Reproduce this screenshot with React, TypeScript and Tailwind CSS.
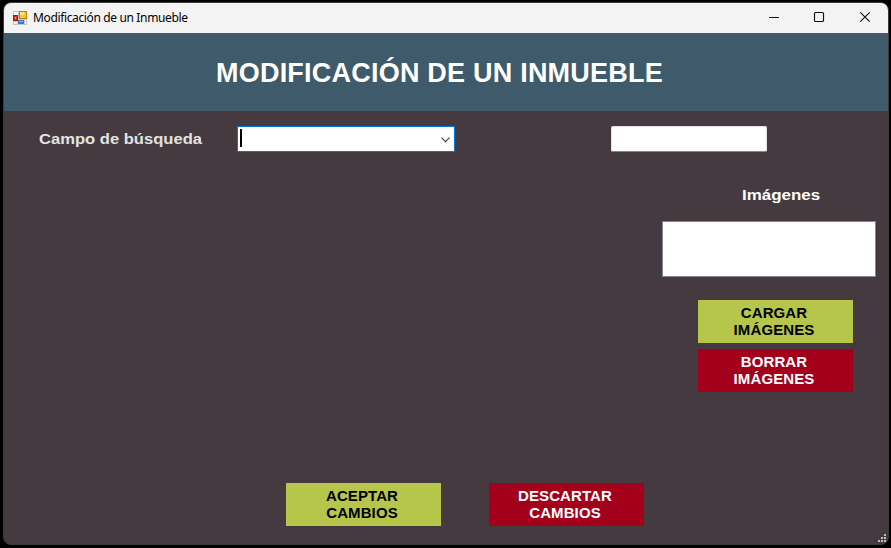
import type { ReactNode } from "react";

function FormIcon() {
  return (
    <svg width="14" height="14" viewBox="0 0 14 14" shapeRendering="crispEdges" className="shrink-0">
      <rect x="0" y="0" width="14" height="14" fill="#c3c6cb" />
      <rect x="1" y="1" width="4" height="3" fill="#fafafa" />
      <rect x="1" y="11" width="3" height="2" fill="#fafafa" />
      <rect x="12" y="9" width="1" height="4" fill="#fafafa" />
      <rect x="0" y="4" width="5" height="6" fill="#a3140d" />
      <rect x="1" y="5" width="3" height="4" fill="#d5372b" />
      <rect x="2" y="6" width="1" height="2" fill="#f39a8f" />
      <rect x="6" y="0" width="8" height="8" fill="#b98212" />
      <rect x="7" y="1" width="6" height="6" fill="#f9c62d" />
      <rect x="7" y="1" width="4" height="3" fill="#fde387" />
      <rect x="5" y="9" width="6" height="4" fill="#3c78d8" />
      <rect x="6" y="10" width="4" height="1" fill="#83b2f5" />
    </svg>
  );
}

function TitleBar() {
  return (
    <div className="flex h-[30px] shrink-0 items-center bg-[#f3f3f3] pl-[9px] text-black">
      <FormIcon />
      <span className="ml-[6px] whitespace-nowrap font-['Noto_Sans',sans-serif] text-[12px] leading-[16px] tracking-[-0.36px]">
        Modificación de un Inmueble
      </span>
      <div className="ml-auto flex h-full items-center">
        <svg width="136" height="30" viewBox="0 0 136 30" fill="none" stroke="#111">
          <path d="M17 14.5h10" shapeRendering="crispEdges" />
          <rect x="62.5" y="9.5" width="9" height="9" rx="1" strokeWidth="1.15" />
          <path d="M108.3 9.3l9.4 9.4M117.7 9.3l-9.4 9.4" strokeWidth="1.15" />
        </svg>
      </div>
    </div>
  );
}

function ActionButton({ tone, children }: { tone: "accept" | "discard"; children: ReactNode }) {
  return (
    <button
      className={
        "flex h-[43px] w-[155px] shrink-0 items-center justify-center pb-px text-center text-[15px] font-bold leading-[17px] tracking-[0.1px] " +
        (tone === "accept" ? "bg-[#b5c64a] text-black" : "bg-[#a3001c] text-white")
      }
    >
      <span className="-ml-[3px]">{children}</span>
    </button>
  );
}

export default function App() {
  return (
    <div className="h-[548px] w-[891px] bg-black pl-[3px] pt-[2px] font-['Liberation_Sans',Arial,sans-serif]">
      <div className="flex h-[543px] w-[886px] flex-col overflow-hidden rounded-[8px] border border-[#3d3a3c] bg-[#443a3f]">
        <TitleBar />
        <header className="flex h-[78px] shrink-0 items-center bg-[#3e5a6b] pl-[212px] pt-[2px]">
          <h1 className="whitespace-nowrap text-[27px] font-bold leading-[32px] tracking-[0.22px] text-white">
            MODIFICACIÓN DE UN INMUEBLE
          </h1>
        </header>
        <div className="mt-[15px] flex h-[26px] shrink-0 items-center">
          <label className="ml-[35px] w-[198px] origin-left scale-x-[1.105] whitespace-nowrap text-[15px] font-bold leading-[20px] text-[#e3e3e3]">
            Campo de búsqueda
          </label>
          <div className="flex h-[26px] w-[218px] items-center justify-between rounded-[1px] border border-[#0078d7] bg-white pl-[2px] pr-[4px]">
            <span className="mb-[2px] h-[18px] w-[2px] bg-black" />
            <svg width="9" height="6" viewBox="0 0 9 6" fill="none" stroke="#444" strokeWidth="1.2" className="mt-[2px]">
              <path d="M.5 .7l4 4 4-4" />
            </svg>
          </div>
          <div className="ml-[156px] h-[26px] w-[156px] rounded-[2px] border border-[#e3e1e2] border-b-[#868686] bg-white" />
        </div>
        <div className="ml-[658px] flex w-[214px] flex-col">
          <h2 className="ml-[80px] mt-[33px] origin-left scale-x-[1.13] self-start whitespace-nowrap text-[15px] font-bold leading-[20px] text-white">
            Imágenes
          </h2>
          <div className="mt-[16px] h-[56px] border border-[#828790] bg-white" />
          <div className="ml-[36px] mt-[23px] flex flex-col gap-[6px]">
            <ActionButton tone="accept">CARGAR<br />IMÁGENES</ActionButton>
            <ActionButton tone="discard">BORRAR<br />IMÁGENES</ActionButton>
          </div>
        </div>
        <div className="ml-[282px] mt-[91px] flex gap-[48px]">
          <ActionButton tone="accept">ACEPTAR<br />CAMBIOS</ActionButton>
          <ActionButton tone="discard">DESCARTAR<br />CAMBIOS</ActionButton>
        </div>
        <svg width="8" height="8" viewBox="0 0 8 8" fill="#c2bec0" shapeRendering="crispEdges" className="ml-auto mr-[2px] mt-[8px] shrink-0">
          <path d="M6 0h2v2H6zM3 3h2v2H3zM6 3h2v2H6zM0 6h2v2H0zM3 6h2v2H3zM6 6h2v2H6z" />
        </svg>
      </div>
    </div>
  );
}
